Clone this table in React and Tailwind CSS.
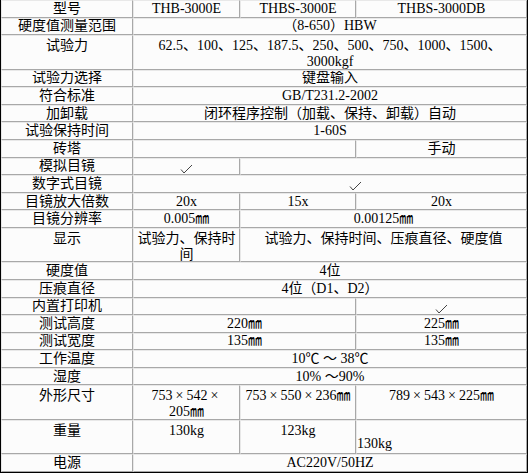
import React from "react";

const SPAN = { 1: "", 2: "col-span-2", 3: "col-span-3" };

function Check() {
  return (
    <svg width="13" height="10" viewBox="0 0 13 10" className="mt-[5px]">
      <path d="M1 5.5 L4 9 L12 1" fill="none" stroke="#444" strokeWidth="1" />
    </svg>
  );
}

// full-width multiplication sign, like the original table font
const X = () => <span className="inline-block w-[14px] text-center">×</span>;

function Cell({ span = 1, top, bottomLeft, className = "", children }) {
  let align = "items-center justify-center text-center";
  if (top) align = "items-start justify-center text-center pt-[2px]";
  if (bottomLeft) align = "items-end justify-start text-left pb-[1px]";
  return (
    <div
      className={`${SPAN[span]} flex ${align} overflow-hidden whitespace-nowrap border border-t-[#e8e8e8] border-l-[#e8e8e8] border-r-[#a8a8a8] border-b-[#a8a8a8] bg-[#fcfcfc] ${className}`}
    >
      <div>{children}</div>
    </div>
  );
}

export default function App() {
  return (
    <div className="w-[528px] h-[473px] bg-[#fcfcfc] border-l border-r border-b border-black font-['Liberation_Serif','Noto_Sans_CJK_SC',serif] text-[14px] leading-[16px] text-black">
      <div className="grid grid-cols-[132px_107px_116px_171px] grid-rows-[repeat(2,17.6px)_34.4px_repeat(9,17.6px)_34.4px_repeat(7,17.6px)_34.4px_34.4px_17.6px]">
        {/* 型号 */}
        <Cell>型号</Cell>
        <Cell>THB-3000E</Cell>
        <Cell>THBS-3000E</Cell>
        <Cell>THBS-3000DB</Cell>

        <Cell>硬度值测量范围</Cell>
        <Cell span={3}>（8-650）HBW</Cell>

        <Cell top>试验力</Cell>
        <Cell span={3} top>
          62.5、100、125、187.5、250、500、750、1000、1500、
          <br />
          3000kgf
        </Cell>

        <Cell>试验力选择</Cell>
        <Cell span={3}>键盘输入</Cell>

        <Cell>符合标准</Cell>
        <Cell span={3}>GB/T231.2-2002</Cell>

        <Cell>加卸载</Cell>
        <Cell span={3}>闭环程序控制（加载、保持、卸载）自动</Cell>

        <Cell>试验保持时间</Cell>
        <Cell span={3}>1-60S</Cell>

        <Cell>砖塔</Cell>
        <Cell span={2}></Cell>
        <Cell>手动</Cell>

        <Cell>模拟目镜</Cell>
        <Cell><Check /></Cell>
        <Cell span={2}></Cell>

        <Cell>数字式目镜</Cell>
        <Cell span={3} className="pl-[50px]"><Check /></Cell>

        <Cell>目镜放大倍数</Cell>
        <Cell>20x</Cell>
        <Cell>15x</Cell>
        <Cell>20x</Cell>

        <Cell>目镜分辨率</Cell>
        <Cell>0.005㎜</Cell>
        <Cell span={2}>0.00125㎜</Cell>

        <Cell top>显示</Cell>
        <Cell top>
          试验力、保持时
          <br />
          间
        </Cell>
        <Cell span={2} top>试验力、保持时间、压痕直径、硬度值</Cell>

        <Cell>硬度值</Cell>
        <Cell span={3}>4位</Cell>

        <Cell>压痕直径</Cell>
        <Cell span={3}>4位（D1、D2）</Cell>

        <Cell>内置打印机</Cell>
        <Cell span={2}></Cell>
        <Cell><Check /></Cell>

        <Cell>测试高度</Cell>
        <Cell span={2}>220㎜</Cell>
        <Cell>225㎜</Cell>

        <Cell>测试宽度</Cell>
        <Cell span={2}>135㎜</Cell>
        <Cell>135㎜</Cell>

        <Cell>工作温度</Cell>
        <Cell span={3}>10℃ ～ 38℃</Cell>

        <Cell>湿度</Cell>
        <Cell span={3}>10% ～90%</Cell>

        <Cell top>外形尺寸</Cell>
        <Cell top>
          753<X />542<X />
          <br />
          205㎜
        </Cell>
        <Cell top>753<X />550<X />236㎜</Cell>
        <Cell top>789<X />543<X />225㎜</Cell>

        <Cell top>重量</Cell>
        <Cell top>130kg</Cell>
        <Cell top>123kg</Cell>
        <Cell bottomLeft>130kg</Cell>

        <Cell>电源</Cell>
        <Cell span={3}>AC220V/50HZ</Cell>
      </div>
    </div>
  );
}
